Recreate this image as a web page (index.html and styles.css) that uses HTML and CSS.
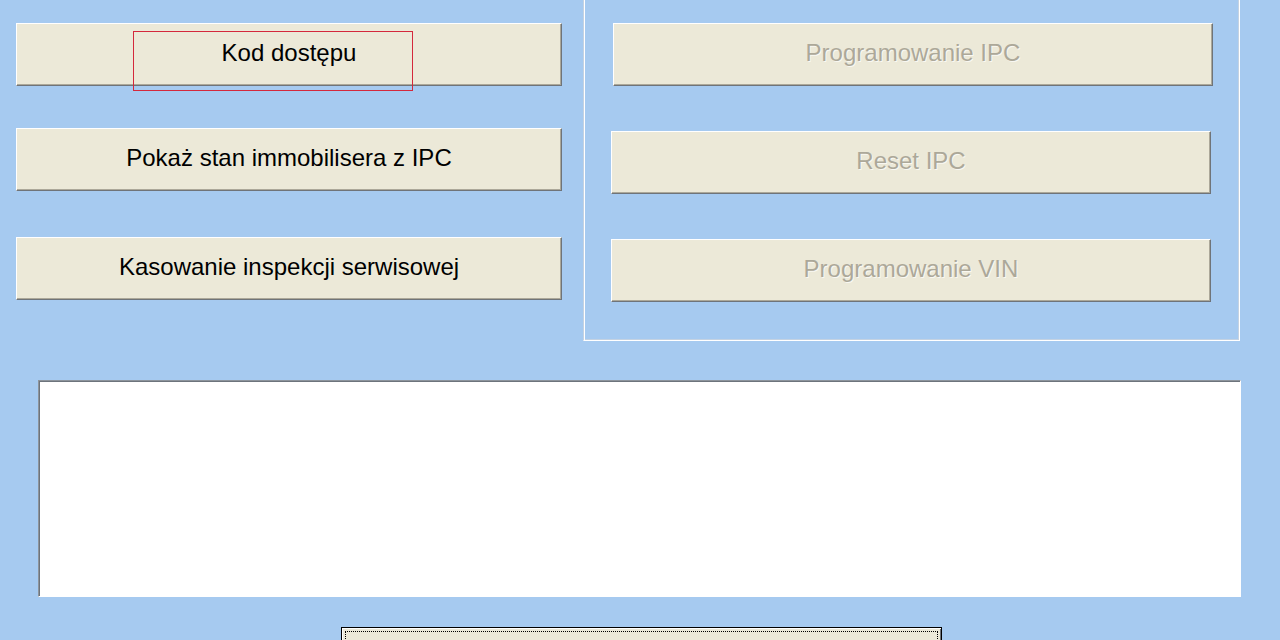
FILE: index.html
```html
<!DOCTYPE html>
<html lang="pl">
<head>
<meta charset="utf-8">
<title>IPC</title>
<link rel="stylesheet" href="styles.css">
</head>
<body>
<div class="page">
  <div class="top">
    <div class="left-col">
      <div class="btn">Kod dostępu</div>
      <div class="btn">Pokaż stan immobilisera z IPC</div>
      <div class="btn btn-gap">Kasowanie inspekcji serwisowej</div>
    </div>
    <div class="groupbox">
      <div class="btn btn-wide btn-disabled btn-shift">Programowanie IPC</div>
      <div class="btn btn-wide btn-disabled">Reset IPC</div>
      <div class="btn btn-wide btn-disabled">Programowanie VIN</div>
    </div>
  </div>
  <div class="memo"></div>
  <div class="btn-default"><div class="focus-dots"></div></div>
  <div class="focus-red"></div>
</div>
</body>
</html>
```
FILE: styles.css
```css
html, body {
  margin: 0;
  padding: 0;
}
body {
  background: #a6caf0;
  width: 1280px;
  height: 640px;
  overflow: hidden;
  font-family: "Liberation Sans", Arial, sans-serif;
}
.page {
  position: relative;
  width: 1280px;
  height: 640px;
}
.top {
  display: flex;
  align-items: flex-start;
  height: 341px;
}
.left-col {
  display: flex;
  flex-direction: column;
  gap: 42px;
  padding-left: 16px;
  padding-top: 23px;
  width: 546px;
}
.btn {
  box-sizing: border-box;
  height: 63px;
  background: #ece9d8;
  border: 1px solid;
  border-color: #ffffff #6f7479 #6f7479 #ffffff;
  box-shadow: inset -1px -1px 0 #aca899;
  display: flex;
  align-items: center;
  justify-content: center;
  font-size: 24px;
  color: #000;
  padding-bottom: 4px;
  white-space: nowrap;
}
.btn-gap {
  margin-top: 4px;
}
.groupbox {
  box-sizing: border-box;
  margin-left: 21px;
  margin-top: -10px;
  width: 657px;
  height: 351px;
  border: 1px solid;
  border-color: #c4d2e2 #ffffff #ffffff #c4d2e2;
  box-shadow: inset 1px 1px 0 #ffffff, inset -1px -1px 0 #c4d2e2;
  display: flex;
  flex-direction: column;
  gap: 45px;
  padding-left: 27px;
  padding-top: 32px;
}
.btn-wide {
  width: 600px;
}
.btn-shift {
  margin-left: 2px;
}
.btn-disabled {
  color: #aca899;
  text-shadow: 1px 1px 0 rgba(255, 255, 255, 0.7);
}
.memo {
  box-sizing: border-box;
  margin-top: 39px;
  margin-left: 38px;
  width: 1203px;
  height: 217px;
  background: #ffffff;
  border: 1px solid;
  border-color: #8d949c #ffffff #ffffff #8d949c;
  box-shadow: inset 1px 1px 0 #6d747c;
}
.btn-default {
  box-sizing: border-box;
  margin-top: 30px;
  margin-left: 341px;
  width: 601px;
  height: 40px;
  background: #ece9d8;
  border: 1px solid #000;
  box-shadow: inset 1px 1px 0 #ffffff, inset -1px -1px 0 #6f7479;
  padding: 3px;
}
.focus-dots {
  height: 100%;
  border: 1px dotted #000;
  box-sizing: border-box;
}
.focus-red {
  position: absolute;
  left: 133px;
  top: 31px;
  width: 280px;
  height: 60px;
  box-sizing: border-box;
  border: 1px solid #d4283c;
}
```
